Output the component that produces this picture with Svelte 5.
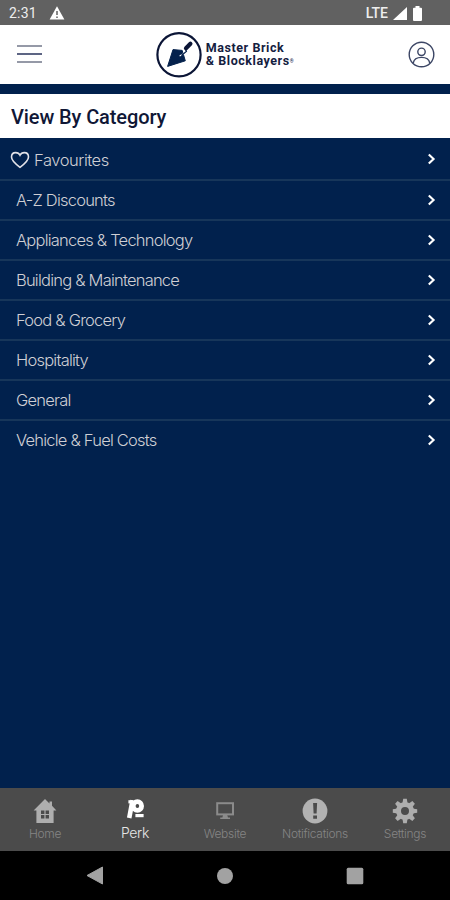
<script>
  let categories = [
    'A-Z Discounts',
    'Appliances & Technology',
    'Building & Maintenance',
    'Food & Grocery',
    'Hospitality',
    'General',
    'Vehicle & Fuel Costs'
  ];

  let tabs = ['Home', 'Perk', 'Website', 'Notifications', 'Settings'];
  let activeTab = 'Perk';

  // gear teeth, one every 45 degrees
  let teeth = [0, 45, 90, 135, 180, 225, 270, 315];
</script>

<div class="screen">
  <!-- status bar -->
  <div class="status">
    <span class="time">2:31</span>
    <svg class="warn" width="16" height="14" viewBox="0 0 16 14">
      <path d="M8 0.3 L15.4 13.6 H0.6 Z" fill="#fff" />
      <path d="M8 5 V9 M8 10.4 V12" stroke="#616161" stroke-width="1.5" />
    </svg>
    <span class="lte">LTE</span>
    <svg class="signal" width="14" height="13" viewBox="0 0 14 13">
      <path d="M14 0 V13 H0 Z" fill="#fff" />
    </svg>
    <svg width="9" height="15" viewBox="0 0 9 15">
      <path d="M2.5 0 H6.5 V1.8 H8 Q9 1.8 9 2.8 V14 Q9 15 8 15 H1 Q0 15 0 14 V2.8 Q0 1.8 1 1.8 H2.5 Z" fill="#fff" />
    </svg>
  </div>

  <header>
    <button class="menu" aria-label="Menu">
      <i></i><i class="mid"></i><i></i>
    </button>

    <div class="brand">
      <svg width="47" height="48" viewBox="0 0 47 48">
        <circle cx="23" cy="23.8" r="21.6" fill="none" stroke="#0b1536" stroke-width="2.2" />
        <path d="M17 18.6 L26.2 19.4 L29.3 29.8 L11.6 35.4 Z" fill="#04214c" stroke="#04214c" stroke-width="1" stroke-linejoin="round" />
        <path d="M23.6 25 L28.4 22.2 L27.4 18.6" fill="none" stroke="#fff" stroke-width="1.2" />
        <path d="M25.4 24.4 L30.4 20.4 L29.2 17.6" fill="none" stroke="#04214c" stroke-width="1.3" />
        <path d="M30 17.2 L34.4 12.8" stroke="#0b1536" stroke-width="4.2" stroke-linecap="round" />
      </svg>
      <div class="name">
        <span>Master Brick</span>
        <span>&amp; Blocklayers<small>®</small></span>
      </div>
    </div>

    <svg class="user" width="27" height="27" viewBox="0 0 27 27" fill="none" stroke="#3c4665" stroke-width="1.4">
      <circle cx="13.5" cy="13.5" r="12.3" />
      <circle cx="13.5" cy="10.8" r="3.7" />
      <path d="M5.3 22 C6 17.5 9.5 16.4 13.5 16.4 S21 17.5 21.7 22" />
    </svg>
  </header>

  <h1>View By Category</h1>

  <main>
    <div class="row fav">
      <svg class="heart" width="20" height="18" viewBox="0 0 20 18">
        <path d="M10 16.3 C5 12.6 1.5 9.8 1.5 6 C1.5 3.3 3.4 1.6 5.7 1.6 C7.6 1.6 9.2 2.6 10 4.2 C10.8 2.6 12.4 1.6 14.3 1.6 C16.6 1.6 18.5 3.3 18.5 6 C18.5 9.8 15 12.6 10 16.3 Z" fill="none" stroke="#e2e2e8" stroke-width="1.6" />
      </svg>
      <span>Favourites</span>
      <svg class="chevron" width="9" height="12" viewBox="0 0 9 12">
        <path d="M1.8 1.4 L6.6 6 L1.8 10.6" fill="none" stroke="#fff" stroke-width="2.1" />
      </svg>
    </div>
    {#each categories as category}
      <div class="row">
        <span>{category}</span>
        <svg class="chevron" width="9" height="12" viewBox="0 0 9 12">
          <path d="M1.8 1.4 L6.6 6 L1.8 10.6" fill="none" stroke="#fff" stroke-width="2.1" />
        </svg>
      </div>
    {/each}
  </main>

  <nav class="tabs">
    {#each tabs as tab}
      <div class="tab" class:active={tab == activeTab}>
        <svg width="26" height="26" viewBox="0 0 26 26">
          {#if tab == 'Home'}
            <path d="M13 1 L17.5 5.4 V3.4 H20 V7.8 L24.4 12.4 H21.6 V25 H4.4 V12.4 H1.6 Z" fill="#aeaeae" />
            <path d="M9 12.6 h3.4 v3.3 h-3.4 z M13.6 12.6 h3.4 v3.3 h-3.4 z M9 17.1 h3.4 v3.3 h-3.4 z M13.6 17.1 h3.4 v3.3 h-3.4 z" fill="#4b4b4b" />
          {:else if tab == 'Perk'}
            <g fill="none" stroke="#fff">
              <path d="M10.6 2.2 L7.2 20" stroke-width="4.6" />
              <path d="M6.4 3.8 H11" stroke-width="3.2" />
              <ellipse cx="15.4" cy="8" rx="4.2" ry="4.3" stroke-width="4.8" />
              <path d="M13.4 17.6 H21.6" stroke-width="3.2" />
            </g>
          {:else if tab == 'Website'}
            <rect x="5.2" y="5.2" width="15.8" height="11.2" fill="none" stroke="#8b8b8b" stroke-width="2" />
            <path d="M11 17 H15.2 L16 19.4 H18 V21 H8.2 V19.4 H10.4 Z" fill="#8b8b8b" />
          {:else if tab == 'Notifications'}
            <circle cx="13" cy="13" r="12.4" fill="#b2b2b2" />
            <path d="M11.1 5 H15.1 L14.6 15.4 H11.6 Z M11.2 17.4 H15 V20.8 H11.2 Z" fill="#4b4b4b" />
          {:else}
            {#each teeth as angle}
              <path d="M10.4 5.5 L11.2 0.8 H14.8 L15.6 5.5 Z" fill="#adadad" transform="rotate({angle} 13 13)" />
            {/each}
            <circle cx="13" cy="13" r="6.5" fill="none" stroke="#adadad" stroke-width="5" />
          {/if}
        </svg>
        <span>{tab}</span>
      </div>
    {/each}
  </nav>

  <!-- android buttons -->
  <div class="system">
    <div><svg width="18" height="19" viewBox="0 0 18 19"><path d="M16.5 1 V18 L1 9.5 Z" fill="#a2a2a2" stroke="#a2a2a2" stroke-linejoin="round" /></svg></div>
    <div><svg width="18" height="18" viewBox="0 0 18 18"><circle cx="9" cy="9" r="8" fill="#a2a2a2" /></svg></div>
    <div><svg width="18" height="18" viewBox="0 0 18 18"><rect x="0.7" y="0.7" width="16.6" height="16.6" rx="1.5" fill="#a2a2a2" /></svg></div>
  </div>
</div>

<style>
:global(body) {
  margin: 0;
}

.screen {
  width: 450px;
  height: 900px;
  display: flex;
  flex-direction: column;
  background: #fff;
  font-family: Inter, "Liberation Sans", sans-serif;
  overflow: hidden;
}

.status {
  height: 25px;
  box-sizing: border-box;
  display: flex;
  align-items: center;
  padding: 1px 28px 0 9px;
  background: #616161;
  color: #eee;
  font: 14px Roboto, sans-serif;
}

.time {
  letter-spacing: 0.2px;
}

.warn {
  margin-left: 12px;
}

.lte {
  margin-left: auto;
  font-weight: 500;
}

.signal {
  margin: 0 6px 0 5px;
}

header {
  height: 59px;
  display: flex;
  align-items: center;
  justify-content: space-between;
  padding: 0 15px 0 17px;
  border-bottom: 10px solid #01214d;
}

.menu {
  width: 25px;
  padding: 0 0 2px;
  border: 0;
  background: none;
  display: flex;
  flex-direction: column;
  gap: 6px;
}

.menu i {
  height: 2px;
  background: #9599a7;
}

.menu .mid {
  background: #5d6584;
}

.brand {
  display: flex;
  align-items: center;
  gap: 3px;
}

.name {
  display: flex;
  flex-direction: column;
  color: #14203f;
  font: bold 12.5px/12.5px Roboto, sans-serif;
  letter-spacing: 0.55px;
  white-space: nowrap;
}

.name small {
  font-size: 5px;
  line-height: 0;
  vertical-align: 2px;
}

h1 {
  height: 44px;
  margin: 0;
  padding: 2px 0 0 11px;
  box-sizing: border-box;
  color: #101736;
  font: 500 20px/43px Roboto, sans-serif;
  letter-spacing: -0.1px;
}

main {
  flex: 1;
  background: #01214d;
}

.row {
  height: 40px;
  box-sizing: border-box;
  display: flex;
  align-items: center;
  padding: 0 14px 0 16px;
  border-bottom: 2px solid #17365a;
  color: #cfcfd4;
  font-size: 16.5px;
  font-weight: 300;
  letter-spacing: -0.78px;
}

.row span {
  padding-bottom: 1px;
}

.row:last-child {
  border-bottom-color: transparent;
}

.row.fav {
  height: 43px;
  padding-left: 10px;
  letter-spacing: -0.45px;
}

.heart {
  margin: 2px 4px 0 0;
}

.row.fav span {
  padding: 3px 0 0;
}

.chevron {
  margin-left: auto;
}

.tabs {
  height: 63px;
  display: flex;
  background: #4b4b4b;
}

.tab {
  flex: 1;
  display: flex;
  flex-direction: column;
  align-items: center;
  padding-top: 10px;
  color: #858585;
  font-size: 12px;
  font-weight: 300;
  line-height: 20px;
  letter-spacing: -0.3px;
}

.tab.active {
  color: #e6e6e6;
  font-size: 14px;
  line-height: 18px;
}

.system {
  height: 49px;
  display: flex;
  justify-content: space-between;
  align-items: center;
  padding: 0 86px;
  background: #000;
}

.system svg {
  display: block;
}
</style>
